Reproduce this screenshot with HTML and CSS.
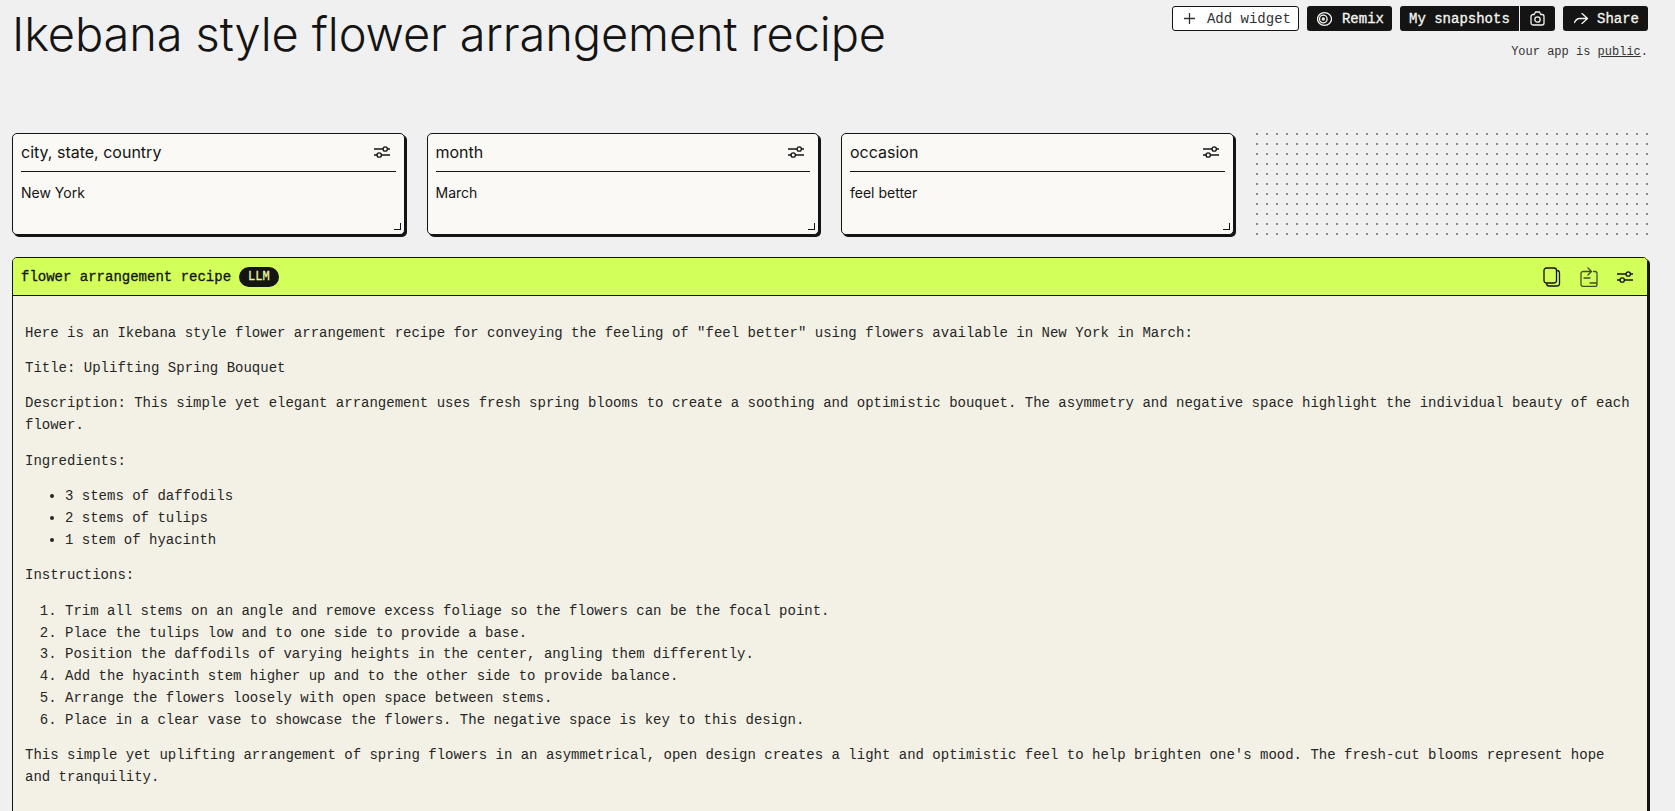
FILE: index.html
```html
<!DOCTYPE html>
<html lang="en">
<head>
    <meta charset="UTF-8">
    <meta name="viewport" content="width=device-width, initial-scale=1.0">
    <title>Ikebana style flower arrangement recipe</title>
    <link rel="stylesheet" href="styles.css">
</head>
<body>
    <header class="top-bar">
        <h1 class="app-title">Ikebana style flower arrangement recipe</h1>
        <div class="top-actions">
            <div class="button-row">
                <button class="btn btn-light btn-add">
                    <svg class="icon" width="11" height="11" viewBox="0 0 11 11"><path d="M5.5 0v11M0 5.5h11"/></svg>
                    Add widget
                </button>
                <button class="btn btn-remix">
                    <svg class="icon" width="15" height="14" viewBox="0 0 15 14"><ellipse cx="7.5" cy="7" rx="7" ry="6.3"/><circle cx="6.3" cy="7" r="3.8"/><circle cx="6.3" cy="7" r="1"/></svg>
                    Remix
                </button>
                <div class="btn-group">
                    <button class="btn btn-snapshots">My snapshots</button>
                    <button class="btn btn-camera">
                        <svg class="icon" width="15" height="15" viewBox="0 0 15 15"><path d="M1 5.5a2 2 0 0 1 2-2h1.2l1.3-2.5h4l1.3 2.5H12a2 2 0 0 1 2 2V12a2 2 0 0 1-2 2H3a2 2 0 0 1-2-2z"/><circle cx="7.5" cy="8.5" r="2.7"/></svg>
                    </button>
                </div>
                <button class="btn btn-share">
                    <svg class="icon" width="14" height="11" viewBox="0 0 14 11"><path d="M8 .5l5.5 5-5.5 5M13.5 5.5H5.500C3 5.500 1.500 7.500.5 9.500"/></svg>
                    Share
                </button>
            </div>
            <p class="visibility">Your app is <a href="#">public</a>.</p>
        </div>
    </header>

    <section class="input-grid">
        <div class="input-card">
            <div class="input-head">
                <span>city, state, country</span>
                <svg class="icon" width="16" height="12" viewBox="0 0 16 12"><path d="M0 3h9M13.500 3H16M0 9h3M7.500 9H16"/><circle cx="11.200" cy="3" r="2.200"/><circle cx="5.200" cy="9" r="2.200"/></svg>
            </div>
            <p class="input-value">New York</p>
            <span class="resize-handle"></span>
        </div>
        <div class="input-card">
            <div class="input-head">
                <span>month</span>
                <svg class="icon" width="16" height="12" viewBox="0 0 16 12"><path d="M0 3h9M13.500 3H16M0 9h3M7.500 9H16"/><circle cx="11.200" cy="3" r="2.200"/><circle cx="5.200" cy="9" r="2.200"/></svg>
            </div>
            <p class="input-value">March</p>
            <span class="resize-handle"></span>
        </div>
        <div class="input-card">
            <div class="input-head">
                <span>occasion</span>
                <svg class="icon" width="16" height="12" viewBox="0 0 16 12"><path d="M0 3h9M13.500 3H16M0 9h3M7.500 9H16"/><circle cx="11.200" cy="3" r="2.200"/><circle cx="5.200" cy="9" r="2.200"/></svg>
            </div>
            <p class="input-value">feel better</p>
            <span class="resize-handle"></span>
        </div>
        <div class="dot-grid"></div>
    </section>

    <section class="output-card">
        <div class="output-head">
            <span class="output-name">flower arrangement recipe</span>
            <span class="badge">LLM</span>
            <div class="output-tools">
                <svg class="icon" width="18" height="20" viewBox="0 0 18 20"><rect x="1" y="1" width="12.500" height="15" rx="2.500"/><path d="M14.500 3.500c1.300.3 2 1.200 2 2.500v10.500c0 1.500-1 2.500-2.500 2.500H6c-1.300 0-2.200-.7-2.500-2"/></svg>
                <svg class="icon icon-soft" width="18" height="20" viewBox="0 0 18 20"><path d="M13.500 4.500H15a2 2 0 0 1 2 2v11a2 2 0 0 1-2 2H3a2 2 0 0 1-2-2v-11a2 2 0 0 1 2-2h8.500M8 1l3.500 3.500L8 8M4 11h6M10 16h6"/></svg>
                <svg class="icon" width="16" height="12" viewBox="0 0 16 12"><path d="M0 3h9M13.500 3H16M0 9h3M7.500 9H16"/><circle cx="11.200" cy="3" r="2.200"/><circle cx="5.200" cy="9" r="2.200"/></svg>
            </div>
        </div>
        <div class="output-body">
            <p>Here is an Ikebana style flower arrangement recipe for conveying the feeling of "feel better" using flowers available in New York in March:</p>
            <p>Title: Uplifting Spring Bouquet</p>
            <p>Description: This simple yet elegant arrangement uses fresh spring blooms to create a soothing and optimistic bouquet. The asymmetry and negative space highlight the individual beauty of each flower.</p>
            <p>Ingredients:</p>
            <ul>
                <li>3 stems of daffodils</li>
                <li>2 stems of tulips</li>
                <li>1 stem of hyacinth</li>
            </ul>
            <p>Instructions:</p>
            <ol>
                <li>Trim all stems on an angle and remove excess foliage so the flowers can be the focal point.</li>
                <li>Place the tulips low and to one side to provide a base.</li>
                <li>Position the daffodils of varying heights in the center, angling them differently.</li>
                <li>Add the hyacinth stem higher up and to the other side to provide balance.</li>
                <li>Arrange the flowers loosely with open space between stems.</li>
                <li>Place in a clear vase to showcase the flowers. The negative space is key to this design.</li>
            </ol>
            <p>This simple yet uplifting arrangement of spring flowers in an asymmetrical, open design creates a light and optimistic feel to help brighten one's mood. The fresh-cut blooms represent hope and tranquility.</p>
        </div>
    </section>
</body>
</html>
```

FILE: styles.css
```css
html {
    overflow: hidden;
}

body {
    margin: 0;
    padding: 0 27px 0 12px;
    background-color: #f0f0f0;
    color: #141414;
    font-family: "Liberation Mono", monospace;
    font-size: 14px;
}

.icon {
    flex: none;
    fill: none;
    stroke: currentColor;
    stroke-width: 1.3;
    stroke-linecap: round;
    stroke-linejoin: round;
}

.icon-soft {
    opacity: 0.75;
}

.top-bar {
    display: flex;
    justify-content: space-between;
    align-items: flex-start;
    height: 133px;
}

.app-title {
    margin: 5px 0 0;
    font-family: Inter, sans-serif;
    font-size: 47px;
    font-weight: 300;
    line-height: 58px;
    letter-spacing: -0.13px;
    white-space: nowrap;
}

.top-actions {
    display: flex;
    flex-direction: column;
    align-items: flex-end;
    padding-top: 6px;
}

.button-row {
    display: flex;
    gap: 8px;
}

.btn {
    display: flex;
    align-items: center;
    height: 25px;
    padding: 0 9px;
    border: 0;
    border-radius: 3px;
    background-color: #141414;
    color: #f5f5f0;
    font-family: "Liberation Mono", monospace;
    font-size: 14px;
    -webkit-text-stroke: 0.3px currentColor;
    white-space: nowrap;
}

.btn-light {
    border: 1px solid #141414;
    background-color: #fff;
    color: #333;
    -webkit-text-stroke: 0;
}

.btn-add {
    gap: 12px;
    padding: 0 7px 0 11px;
}

.btn-remix {
    gap: 10px;
    padding: 0 8px 0 10px;
}

.btn-group {
    display: flex;
    gap: 1px;
}

.btn-snapshots {
    width: 119px;
    border-radius: 3px 0 0 3px;
}

.btn-camera {
    width: 35px;
    padding: 0 10px;
    border-radius: 0 3px 3px 0;
}

.btn-share {
    gap: 9px;
    padding: 0 9px 0 11px;
}

.visibility {
    margin: 13px 0 0;
    color: #333;
    font-size: 12px;
    line-height: 16px;
}

.visibility a {
    color: inherit;
}

.input-grid {
    display: grid;
    grid-template-columns: repeat(4, 1fr);
    gap: 22px;
    height: 102px;
}

.input-card {
    position: relative;
    padding: 0 8px;
    border: 1px solid #141414;
    border-radius: 5px;
    background-color: #faf9f5;
    box-shadow: 2px 2px 0 #141414;
}

.input-head {
    display: flex;
    justify-content: space-between;
    align-items: center;
    height: 35px;
    padding: 0 6px 2px 0;
    border-bottom: 1px solid #141414;
    font-family: Inter, sans-serif;
    font-size: 16px;
}

.input-value {
    margin: 11px 0 0;
    font-family: Inter, sans-serif;
    font-size: 14px;
    line-height: 20px;
}

.resize-handle {
    position: absolute;
    right: 3px;
    bottom: 4px;
    width: 6px;
    height: 6px;
    border-right: 1px solid #141414;
    border-bottom: 1px solid #141414;
}

.dot-grid {
    background-image: radial-gradient(circle, #8a8a8a 1px, transparent 1.2px);
    background-size: 10px 10px;
    background-position: -4px -4px;
}

.output-card {
    margin-top: 22px;
    border: 1px solid #141414;
    border-radius: 5px 5px 0 0;
    box-shadow: 2px 2px 0 #141414;
}

.output-head {
    display: flex;
    align-items: center;
    gap: 8px;
    height: 37px;
    padding: 0 8px;
    border-bottom: 1px solid #141414;
    border-radius: 4px 4px 0 0;
    background-color: #d2ff5a;
}

.output-name {
    -webkit-text-stroke: 0.3px currentColor;
}

.badge {
    padding: 0 9px;
    border-radius: 10px;
    background-color: #141414;
    color: #e6f59a;
    font-size: 12px;
    -webkit-text-stroke: 0.3px currentColor;
    line-height: 20px;
}

.output-tools {
    display: flex;
    align-items: center;
    gap: 19px;
    margin-left: auto;
    padding-right: 6px;
}

.output-body {
    padding: 13px 12px 60px;
    background-color: #f3f1e5;
    color: #262626;
    line-height: 21.84px;
}

.output-body p {
    margin: 13.6px 0;
}

.output-body ul,
.output-body ol {
    margin: 13.6px 0;
    padding-left: 40px;
}
```
